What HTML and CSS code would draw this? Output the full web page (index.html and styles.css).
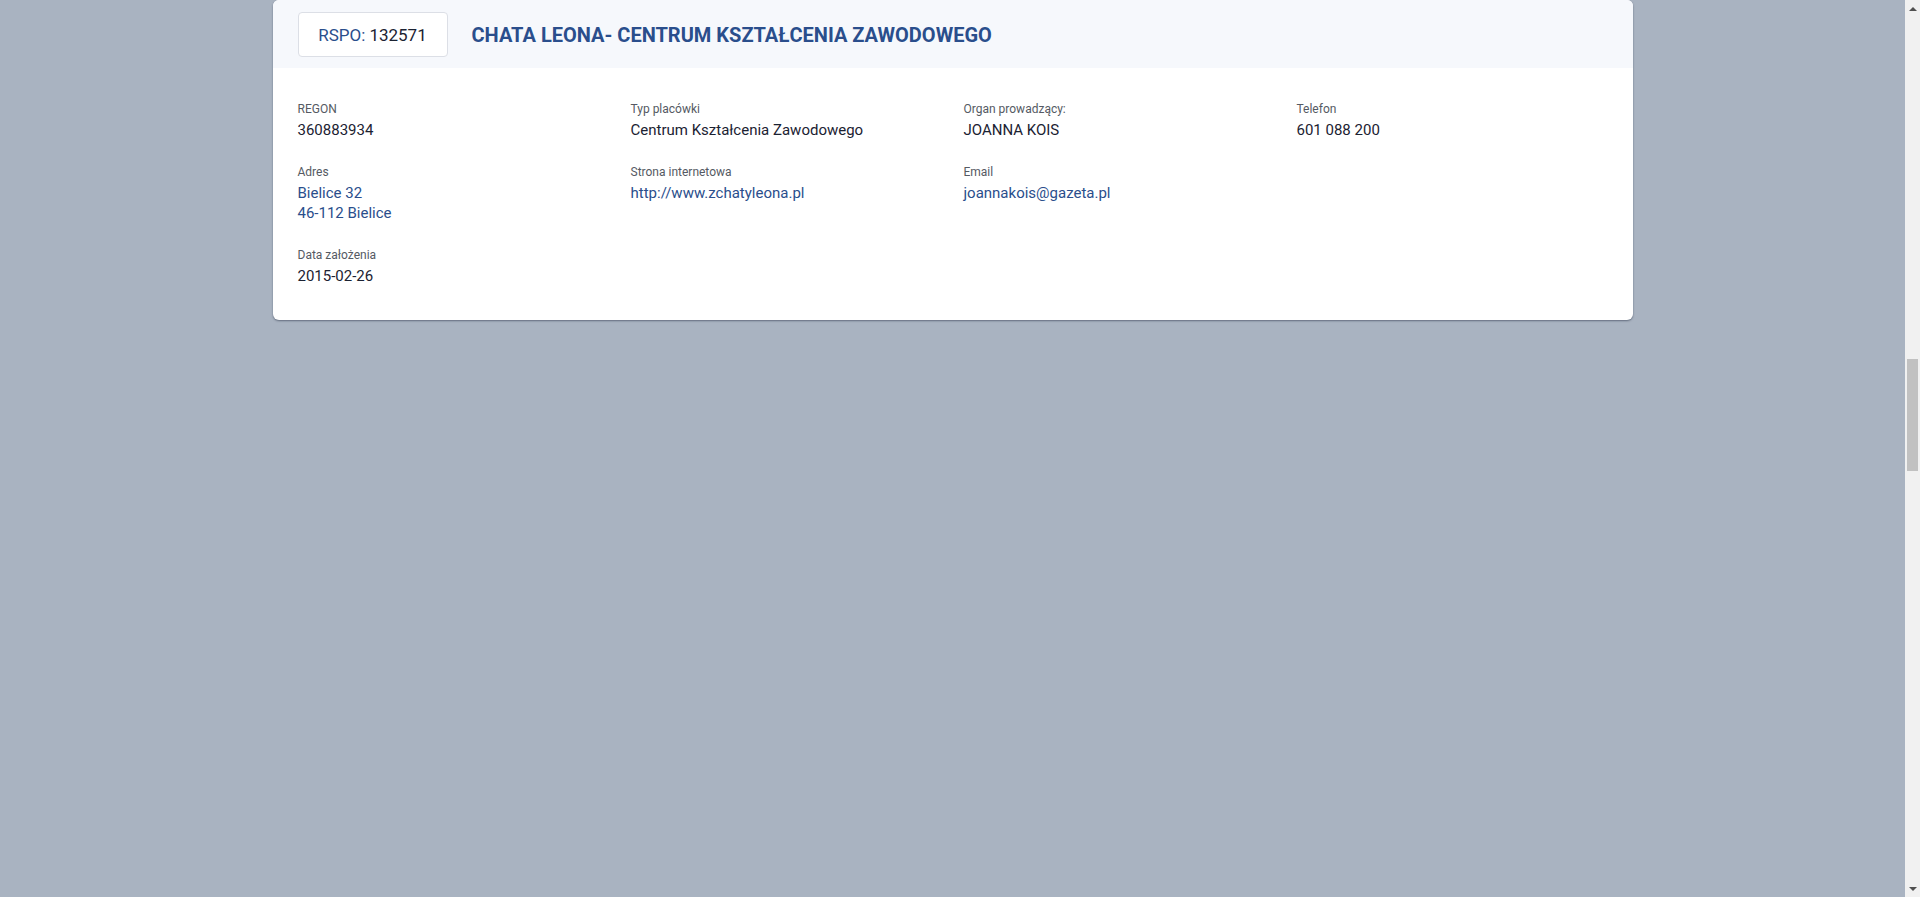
FILE: index.html
```html
<!DOCTYPE html>
<html lang="pl">
<head>
<meta charset="utf-8">
<title>CHATA LEONA- CENTRUM KSZTAŁCENIA ZAWODOWEGO</title>
<link rel="stylesheet" href="styles.css">
</head>
<body>
<div class="viewport">
  <main class="page">
    <section class="card">
      <header class="card-head">
        <div class="rspo"><span class="rspo-label">RSPO:</span> 132571</div>
        <h1 class="title">CHATA LEONA- CENTRUM KSZTAŁCENIA ZAWODOWEGO</h1>
      </header>
      <div class="card-body">
        <div class="grid">
          <div class="field">
            <div class="label">REGON</div>
            <div class="value">360883934</div>
          </div>
          <div class="field">
            <div class="label">Typ placówki</div>
            <div class="value">Centrum Kształcenia Zawodowego</div>
          </div>
          <div class="field">
            <div class="label">Organ prowadzący:</div>
            <div class="value">JOANNA KOIS</div>
          </div>
          <div class="field">
            <div class="label">Telefon</div>
            <div class="value">601 088 200</div>
          </div>
          <div class="field">
            <div class="label">Adres</div>
            <div class="value link">Bielice 32<br>46-112 Bielice</div>
          </div>
          <div class="field">
            <div class="label">Strona internetowa</div>
            <div class="value link">http://www.zchatyleona.pl</div>
          </div>
          <div class="field">
            <div class="label">Email</div>
            <div class="value link">joannakois@gazeta.pl</div>
          </div>
          <div class="field empty"></div>
          <div class="field">
            <div class="label">Data założenia</div>
            <div class="value">2015-02-26</div>
          </div>
        </div>
      </div>
    </section>
  </main>
  <div class="scrollbar">
    <div class="sb-btn"><span class="tri up"></span></div>
    <div class="sb-track">
      <div class="sb-before"></div>
      <div class="sb-thumb"></div>
      <div class="sb-after"></div>
    </div>
    <div class="sb-btn"><span class="tri down"></span></div>
  </div>
</div>
</body>
</html>
```

FILE: styles.css
```css
* { box-sizing: border-box; }
html, body {
  margin: 0;
  padding: 0;
  height: 100%;
  overflow: hidden;
}
body {
  font-family: Roboto, "Liberation Sans", Arial, sans-serif;
  background: #a9b3c1;
  color: #1b2232;
}
.viewport {
  display: flex;
  height: 897px;
}
.page {
  flex: 1;
  display: flex;
  justify-content: center;
  align-items: flex-start;
}
.card {
  width: 1360px;
  background: #ffffff;
  border-radius: 6px;
  box-shadow: 0 1px 2px rgba(40, 50, 70, 0.55);
  overflow: hidden;
}
.card-head {
  height: 68px;
  background: #f6f8fc;
  display: flex;
  align-items: center;
  padding: 1px 25px 0 25px;
}
.rspo {
  width: 150px;
  height: 45px;
  border: 1px solid #dcdfe6;
  border-radius: 4px;
  background: #ffffff;
  display: flex;
  align-items: center;
  justify-content: center;
  gap: 4px;
  font-size: 17px;
  color: #1b2232;
  padding-top: 1px;
}
.rspo-label { color: #2a4e8c; }
.title {
  margin: 0 0 0 24px;
  font-size: 20px;
  font-weight: 700;
  color: #2a4e8c;
  letter-spacing: 0;
}
.card-body {
  padding: 33px 0 10px 25px;
}
.grid {
  display: grid;
  grid-template-columns: repeat(4, 333px);
}
.field {
  margin-bottom: 24px;
}
.label {
  font-size: 12px;
  line-height: 16px;
  color: #555a63;
  margin-bottom: 3px;
}
.value {
  font-size: 15px;
  line-height: 20px;
  color: #1b2232;
}
.value.link { color: #2a4e8c; }

.scrollbar {
  width: 15px;
  background: #f1f1f1;
  display: flex;
  flex-direction: column;
}
.sb-btn {
  height: 17px;
  display: flex;
  align-items: center;
  justify-content: center;
}
.tri {
  width: 0;
  height: 0;
  border-left: 4px solid transparent;
  border-right: 4px solid transparent;
}
.tri.up { border-bottom: 4px solid #505050; }
.tri.down { border-top: 4px solid #505050; }
.sb-track {
  flex: 1;
  display: flex;
  flex-direction: column;
}
.sb-before { height: 342px; }
.sb-thumb {
  height: 112px;
  margin: 0 2px;
  background: #c1c1c1;
}
.sb-after { flex: 1; }
```
